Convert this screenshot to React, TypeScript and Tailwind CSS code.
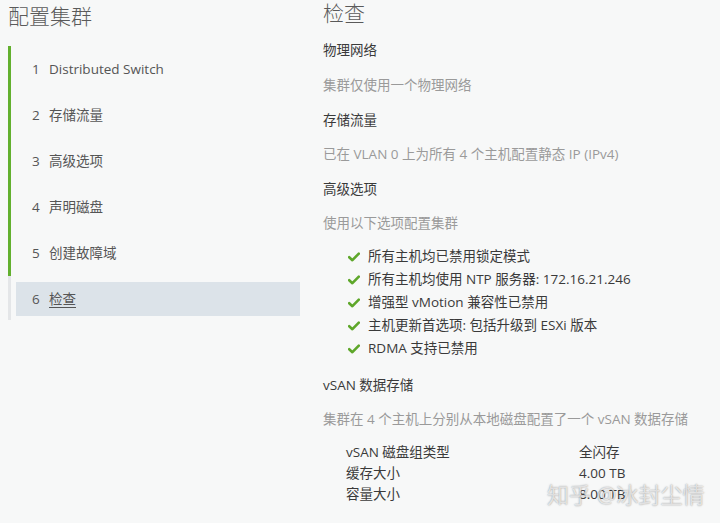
import React from "react";

const font = { fontFamily: '"Open Sans", "Noto Sans CJK SC", sans-serif' };

function Check() {
  return (
    <svg width="12" height="10" viewBox="0 0 12 10" className="shrink-0">
      <path d="M1.2 5.2 L4.4 8.2 L10.8 1.6" fill="none" stroke="#5ea72a" strokeWidth="2.6" strokeLinecap="round" strokeLinejoin="round" />
    </svg>
  );
}

const steps = ["Distributed Switch", "存储流量", "高级选项", "声明磁盘", "创建故障域"];
const checks = [
  "所有主机均已禁用锁定模式",
  "所有主机均使用 NTP 服务器: 172.16.21.246",
  "增强型 vMotion 兼容性已禁用",
  "主机更新首选项: 包括升级到 ESXi 版本",
  "RDMA 支持已禁用",
];

export default function App() {
  return (
    <div className="relative w-[720px] h-[523px] overflow-hidden bg-[#f7f8f8] flex" style={font}>
      <div className="w-[315px] shrink-0 flex flex-col">
        <div className="pl-[8px] pt-[1px] h-[46px] text-[21px] leading-[30px] text-[#5a5a5a] font-light">配置集群</div>
        <div className="ml-[8px] flex flex-col">
          <div className="border-l-[3px] border-[#62b02e] flex flex-col">
            {steps.map((s, i) => (
              <div key={i} className="h-[46px] flex items-center text-[13.5px] text-[#555]">
                <span className="w-[21px] pl-[21px] box-content">{i + 1}</span>
                <span className="ml-[-4px]">{s}</span>
              </div>
            ))}
          </div>
          <div className="border-l-[3px] border-[#e4e6e8] pl-[5px] pt-[6px] pb-[4px]">
            <div className="w-[284px] h-[34px] bg-[#dce3e9] flex items-center text-[13.5px] text-[#555]">
              <span className="w-[21px] pl-[16px] box-content">6</span>
              <span className="ml-[-4px] underline underline-offset-[3px]">检查</span>
            </div>
          </div>
        </div>
      </div>
      <div className="flex-1 pl-[8px] flex flex-col">
        <div className="h-[33px] text-[21px] leading-[26px] text-[#5a5a5a] font-light">检查</div>
        <div className="h-[34px] flex items-center text-[13.5px] text-[#3a3a3a]">物理网络</div>
        <div className="h-[36px] flex items-center text-[13.5px] text-[#9a9a9a]">集群仅使用一个物理网络</div>
        <div className="h-[34px] flex items-center text-[13.5px] text-[#3a3a3a]">存储流量</div>
        <div className="h-[35px] flex items-center text-[13.5px] text-[#9a9a9a]">已在 VLAN 0 上为所有 4 个主机配置静态 IP (IPv4)</div>
        <div className="h-[34px] flex items-center text-[13.5px] text-[#3a3a3a]">高级选项</div>
        <div className="h-[34px] flex items-center text-[13.5px] text-[#9a9a9a]">使用以下选项配置集群</div>
        <div className="flex flex-col pl-[25px] pt-[5px]">
          {checks.map((c, i) => (
            <div key={i} className="h-[23px] flex items-center gap-[8px] text-[13.5px] text-[#3a3a3a]">
              <Check />
              <span>{c}</span>
            </div>
          ))}
        </div>
        <div className="h-[42px] flex items-center pt-[8px] text-[13.5px] text-[#3a3a3a]">vSAN 数据存储</div>
        <div className="h-[35px] flex items-center text-[13.5px] text-[#9a9a9a]">集群在 4 个主机上分别从本地磁盘配置了一个 vSAN 数据存储</div>
        <div className="pl-[23px] pt-[5px] flex flex-col text-[13.5px] text-[#3a3a3a]">
          {[
            ["vSAN 磁盘组类型", "全闪存"],
            ["缓存大小", "4.00 TB"],
            ["容量大小", "8.00 TB"],
          ].map(([a, b], i) => (
            <div key={i} className="h-[21px] flex items-center">
              <span className="w-[233px]">{a}</span>
              <span>{b}</span>
            </div>
          ))}
        </div>
      </div>
      <div className="absolute left-[547px] top-[480px] whitespace-nowrap text-[22px] leading-[28px] text-[rgba(255,255,255,0.7)] [text-shadow:0_0_1.5px_rgba(60,60,60,0.6)]">
        知乎 @冰封尘情
      </div>
    </div>
  );
}
